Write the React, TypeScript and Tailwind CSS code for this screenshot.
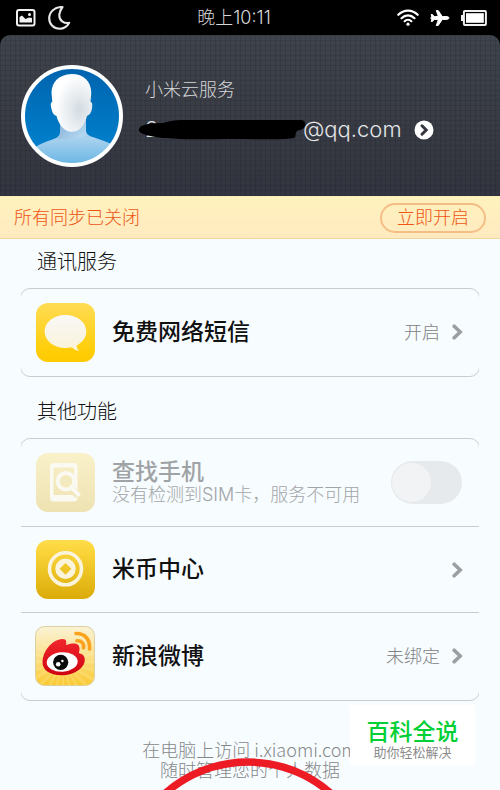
import React from "react";

const GalleryIcon = () => (
  <svg width="20" height="18" viewBox="0 0 20 18" fill="none">
    <rect x="1" y="1" width="17.5" height="15.5" rx="2" stroke="#f2f2f2" strokeWidth="2" />
    <path d="M3.500 13.500V8l2.500-1.500 3.500 3.500 3.500-1.500 3 .5v4.500z" fill="#f2f2f2" />
    <circle cx="13.500" cy="5.500" r="1.500" fill="#f2f2f2" />
  </svg>
);

const MoonIcon = () => (
  <svg width="23" height="24" viewBox="0 0 23 24" fill="none">
    <path
      d="M14.500 1C6.500.8 1.200 6 1.200 12.300c0 6 4.500 10.500 10.500 10.500 4 0 7.500-2.300 9.500-6-4.500 1-11-2-9.700-9C11.900 5 13 3 14.500 1z"
      stroke="#e8e8e8"
      strokeWidth="2.100"
      strokeLinejoin="round"
    />
  </svg>
);

const WifiIcon = () => (
  <svg width="22" height="17" viewBox="0 0 22 17" fill="none" stroke="#fff" strokeLinecap="round">
    <path d="M1.300 5.800c5.500-5.700 13.900-5.700 19.400 0" strokeWidth="2.200" />
    <path d="M4.500 9.200c3.700-3.800 9.300-3.800 13 0" strokeWidth="2.200" />
    <path d="M7.600 12.300c2-2 4.800-2 6.800 0" strokeWidth="2.100" />
    <circle cx="11" cy="15.200" r="1.600" fill="#fff" stroke="none" />
  </svg>
);

const PlaneIcon = () => (
  <svg width="20" height="18" viewBox="0 0 20 18" fill="#fff" stroke="#fff" strokeLinejoin="round">
    <path d="M19 9c0 .9-1.300 1.400-3 1.400h-3.700L8.200 16.500H6.300l2.100-6.100H4.200L2.400 12.500H1.200L1.900 9.800.6 9l1.300-.8-.7-2.700h1.200l1.800 2.100h4.200L6.300 1.500h1.900l4.100 6.100H16c1.700 0 3 .5 3 1.400z" />
  </svg>
);

const BatteryIcon = () => (
  <svg width="26" height="16" viewBox="0 0 26 16">
    <rect x="2.900" y="1.100" width="22" height="13.800" rx="1" fill="none" stroke="#f0f0f0" strokeWidth="2" />
    <rect x="0" y="5" width="3" height="6" fill="#f0f0f0" />
    <rect x="5" y="3.200" width="17.800" height="9.600" fill="#fff" />
  </svg>
);

const Avatar = () => (
  <svg width="102" height="102" viewBox="0 0 102 102" className="shrink-0">
    <defs>
      <linearGradient id="avatarBg" x1="0" y1="0" x2="0" y2="1">
        <stop offset="0" stopColor="#0063ae" />
        <stop offset="1" stopColor="#0086d2" />
      </linearGradient>
      <linearGradient id="avatarBody" x1="0" y1="0" x2="0" y2="1">
        <stop offset="0" stopColor="#86b0d8" />
        <stop offset="0.450" stopColor="#a9d2ee" />
        <stop offset="1" stopColor="#62b2e3" />
      </linearGradient>
      <linearGradient id="avatarNeck" x1="0" y1="0" x2="1" y2="0.400">
        <stop offset="0" stopColor="#7aa5d0" />
        <stop offset="1" stopColor="#b9dbf1" />
      </linearGradient>
      <radialGradient id="avatarHead" cx="0.700" cy="0.620" r="0.600">
        <stop offset="0" stopColor="#d3dce2" />
        <stop offset="0.550" stopColor="#ebeff2" />
        <stop offset="1" stopColor="#ffffff" />
      </radialGradient>
      <clipPath id="avatarClip">
        <circle cx="51" cy="51" r="48" />
      </clipPath>
    </defs>
    <circle cx="51" cy="51" r="49" fill="url(#avatarBg)" />
    <g clipPath="url(#avatarClip)">
      <path d="M39 50v17c0 4-3 6-9 8-8 2.500-13 5-18 9v18h80V80c-5-3-10-4.500-16-6.500-8-2.500-11-4-11-8V50z" fill="url(#avatarBody)" />
      <path d="M39 50v17c0 3-1 5-4 6.500 12 2 24 0 32-3.500-1.500-1-2-2.500-2-4.500V50z" fill="url(#avatarNeck)" opacity="0.700" />
      <path
        d="M50.500 9C38 9.500 30.500 17 30.500 28l.8 9c-1.800 0-1.800 3-.8 7 1 4.500 2.800 6.500 5 7 2 8 7.500 15.800 15.500 15.800S64 59 66 51c2.500-.8 4.300-3.500 5-7.500.7-4.500 0-6.500-1.500-6.500l.8-9C70.300 16.500 63 9 50.500 9z"
        fill="url(#avatarHead)"
      />
    </g>
    <circle cx="51" cy="51" r="49" fill="none" stroke="#fff" strokeWidth="4" />
  </svg>
);

const SmsIcon = () => (
  <svg width="59" height="59" viewBox="0 0 59 59" className="shrink-0">
    <defs>
      <linearGradient id="smsBg" x1="0" y1="0" x2="0" y2="1">
        <stop offset="0" stopColor="#ffdc54" />
        <stop offset="0.850" stopColor="#ffcd05" />
        <stop offset="1" stopColor="#fdc900" />
      </linearGradient>
      <linearGradient id="smsBubble" x1="0" y1="0" x2="0" y2="1">
        <stop offset="0" stopColor="#f8f8f6" />
        <stop offset="1" stopColor="#faf3d9" />
      </linearGradient>
    </defs>
    <rect width="59" height="59" rx="12" fill="url(#smsBg)" />
    <path
      d="M29.500 12C18 12 8.700 19.300 8.700 28.500S18 45 29.500 45c2.300 0 4.300-.2 6.300-.7 2 2 4.400 3.200 7.400 3.700-1.500-1.700-2.400-3.500-2.600-5.600 5.900-3 9.700-8 9.700-13.900C50.300 19.300 41 12 29.500 12z"
      fill="url(#smsBubble)"
    />
  </svg>
);

const FindPhoneIcon = () => (
  <svg width="59" height="59" viewBox="0 0 59 59" className="shrink-0">
    <defs>
      <linearGradient id="findBg" x1="0" y1="0" x2="0" y2="1">
        <stop offset="0" stopColor="#f9f1ca" />
        <stop offset="1" stopColor="#eee2b1" />
      </linearGradient>
    </defs>
    <rect width="59" height="59" rx="12" fill="url(#findBg)" />
    <path
      fillRule="evenodd"
      d="M18 10h19.500a4 4 0 0 1 4 4v30.500a4 4 0 0 1-4 4H18a4 4 0 0 1-4-4V14a4 4 0 0 1 4-4zm.5 4.500a1 1 0 0 0-1 1V41a1 1 0 0 0 1 1H37a1 1 0 0 0 1-1V15.500a1 1 0 0 0-1-1z"
      fill="#fafaf2"
    />
    <path d="M33 33.500l9 9" stroke="#f1e7bb" strokeWidth="7" />
    <circle cx="30" cy="28.300" r="8.300" fill="#f3eabf" stroke="#fafaf2" strokeWidth="4" />
    <path d="M35.500 34.500l7 7" stroke="#fafaf2" strokeWidth="4" strokeLinecap="round" />
  </svg>
);

const CoinIcon = () => (
  <svg width="59" height="59" viewBox="0 0 59 59" className="shrink-0">
    <defs>
      <linearGradient id="coinBg" x1="0" y1="0" x2="0" y2="1">
        <stop offset="0" stopColor="#ffdc4a" />
        <stop offset="0.250" stopColor="#f8d236" />
        <stop offset="1" stopColor="#dbab08" />
      </linearGradient>
    </defs>
    <rect width="59" height="59" rx="12" fill="url(#coinBg)" />
    <circle cx="29.500" cy="28.800" r="16" fill="none" stroke="#faf4dc" strokeWidth="3.600" />
    <path
      fillRule="evenodd"
      d="M29.500 18.600a10.200 10.200 0 1 1 0 20.400 10.200 10.200 0 0 1 0-20.400zm0 4.300l-5.900 5.900 5.900 5.900 5.900-5.900z"
      fill="#faf4dc"
    />
  </svg>
);

const rays = Array.from({ length: 24 }, (_, i) => i * 15);

const WeiboIcon = () => (
  <svg width="60" height="60" viewBox="0 0 60 60" className="-ml-px shrink-0">
    <defs>
      <linearGradient id="weiboBg" x1="0" y1="0" x2="0" y2="1">
        <stop offset="0" stopColor="#faf3da" />
        <stop offset="0.500" stopColor="#fbe08a" />
        <stop offset="1" stopColor="#fbc92f" />
      </linearGradient>
      <linearGradient id="weiboRed" x1="0" y1="0" x2="0" y2="1">
        <stop offset="0" stopColor="#f3262d" />
        <stop offset="1" stopColor="#cd0410" />
      </linearGradient>
      <clipPath id="weiboClip">
        <rect x="0.500" y="0.500" width="59" height="59" rx="9" />
      </clipPath>
    </defs>
    <g clipPath="url(#weiboClip)">
      <rect width="60" height="60" fill="url(#weiboBg)" />
      {rays.map((angle) => (
        <path key={angle} d="M28 36l-3-60h6z" fill="#fff3b0" opacity="0.250" transform={`rotate(${angle} 28 36)`} />
      ))}
    </g>
    <rect x="0.500" y="0.500" width="59" height="59" rx="9" fill="none" stroke="#dccfa4" />
    <path
      d="M7.500 35.500C8 27.500 12.500 20.500 18 16.500c4-3 10-4.500 12-3 1.800 1.300 1.500 3.300.8 5.500 4-1.500 9.700-2.300 12.200-.3 2 1.700 1.800 5.600.8 8.300 3.700 1 6 3 6 6.800 0 8-10.500 15.500-23 15.500S7 43.500 7.500 35.500z"
      fill="url(#weiboRed)"
    />
    <ellipse cx="27.200" cy="36" rx="15.500" ry="9.700" fill="#fff" transform="rotate(-3 27 36)" />
    <circle cx="25.700" cy="36.300" r="7.600" fill="#0a0a0a" />
    <circle cx="23.200" cy="38.300" r="2.300" fill="#fff" />
    <circle cx="27.400" cy="35" r="1.200" fill="#fff" />
    <path d="M41 7.500c8.500-.5 14.500 6 13.500 15.500" fill="none" stroke="#fba21c" strokeWidth="3.600" strokeLinecap="round" />
    <path d="M42 14.800c4.500-.3 7.300 2.800 6.500 7" fill="none" stroke="#fba21c" strokeWidth="3.600" strokeLinecap="round" />
  </svg>
);

const Chevron = () => (
  <svg width="11" height="16" viewBox="0 0 11 16" fill="none" className="shrink-0">
    <path d="M2.200 2.200L8.200 8l-6 5.800" stroke="#9c9fa1" strokeWidth="3.600" strokeLinecap="round" />
  </svg>
);

// Rows under "其他功能" that open another page
const services = [
  { name: "米币中心", status: "", icon: <CoinIcon /> },
  { name: "新浪微博", status: "未绑定", icon: <WeiboIcon /> },
];

const ServiceRow = ({ name, status, icon }: { name: string; status: string; icon: React.ReactNode }) => (
  <a href="#" className="flex h-[86px] items-center pr-4 pl-[15px]">
    {icon}
    <span className="ml-[17px] flex-1 text-[23px] font-medium text-[#111]">{name}</span>
    <span className="mr-3 text-[18px] font-light text-[#7e8183]">{status}</span>
    <Chevron />
  </a>
);

// Side borders sit outside the clipped area, so only the corners curl in
const Card = ({ children }: { children: React.ReactNode }) => (
  <div className="mx-[21px] overflow-hidden">
    <div className="-mx-px divide-y divide-[#c9cdd0] rounded-[10px] border border-[#c9cdd0] pb-px">{children}</div>
  </div>
);

const App: React.FC = () => {
  return (
    <div className="min-h-screen overflow-hidden bg-[#f7fcff] font-['Inter','Noto_Sans_CJK_SC',sans-serif]">
      {/* Status bar */}
      <div className="bg-black">
        <div className="flex h-[35px] items-center justify-between pr-[13px] pl-4">
          <div className="flex items-center gap-3">
            <GalleryIcon />
            <MoonIcon />
          </div>
          <span className="text-[18px] font-light text-[#d8d8d8]">晚上10:11</span>
          <div className="flex items-center gap-[11px]">
            <WifiIcon />
            <PlaneIcon />
            <BatteryIcon />
          </div>
        </div>

        {/* Account */}
        <header className="flex h-[161px] items-center rounded-t-[10px] bg-[repeating-linear-gradient(90deg,rgba(0,0,0,0.1)_0_1px,transparent_1px_5px),repeating-linear-gradient(0deg,rgba(0,0,0,0.08)_0_1px,transparent_1px_5px),linear-gradient(#3f434b,#32353f)] pl-[21px] text-[#e4e5e7]">
          <Avatar />
          <div className="ml-[22px] pb-2">
            <h1 className="text-[18px] leading-6 font-light text-[#d6d8da]">小米云服务</h1>
            <a href="#" className="mt-3 flex h-8 items-center">
              <span className="relative flex w-[158px] text-[22px] font-light">
                2
                <svg width="170" height="22" viewBox="0 0 170 22" className="absolute top-1/2 -left-[7px] -translate-y-1/2">
                  <path d="M1 10C3 5 12 4 25 4c8-2.500 14-3 25-3h112c5 0 6 3 5 6-1 3-5 4-8 5-2 3-1 6-3 7-8 2-35 1-60 1-30 0-50 1-68-1C14 18-1 15 1 10z" />
                </svg>
              </span>
              <span className="text-[22px] font-light">@qq.com</span>
              <svg width="20" height="20" viewBox="0 0 20 20" className="ml-3">
                <circle cx="10" cy="10" r="9.500" fill="#fff" />
                <path d="M8 5.800l4.200 4.200L8 14.200" fill="none" stroke="#34373f" strokeWidth="3" strokeLinecap="round" />
              </svg>
            </a>
          </div>
        </header>
      </div>

      {/* Sync notice */}
      <div className="flex h-[43px] items-center justify-between border-y border-t-[#fbeebd] border-b-[#efd79c] bg-linear-to-b from-[#fff2bd] to-[#ffeac0] px-[14px] text-[18px] font-light text-[#ee5414]">
        <span>所有同步已关闭</span>
        <button className="h-[30px] rounded-full border-2 border-[#f5be86] px-[15px] leading-none font-light">
          立即开启
        </button>
      </div>

      <main>
        <h2 className="px-[37px] pt-2 pb-[11px] text-[20px] leading-[30px] font-light text-[#111]">通讯服务</h2>
        <Card>
          <ServiceRow name="免费网络短信" status="开启" icon={<SmsIcon />} />
        </Card>

        <h2 className="px-[37px] pt-5 pb-[11px] text-[20px] leading-[30px] font-light text-[#111]">其他功能</h2>
        <Card>
          <div className="flex h-[88px] items-center pr-[17px] pl-[15px]">
            <FindPhoneIcon />
            <label htmlFor="find-phone" className="ml-[17px] flex-1">
              <span className="block text-[23px] leading-6 font-medium text-[#a0a3a5]">查找手机</span>
              <span className="block text-[18px] leading-[22px] font-light text-[#a2a5a7]">
                没有检测到SIM卡，服务不可用
              </span>
            </label>
            <input
              id="find-phone"
              type="checkbox"
              disabled
              className="h-[43px] w-[71px] shrink-0 appearance-none rounded-full bg-[#e6eaec] p-px before:mt-px before:block before:size-[39px] before:rounded-full before:bg-[#f2f3f5]"
            />
          </div>
          {services.map((service) => (
            <ServiceRow key={service.name} {...service} />
          ))}
        </Card>
      </main>

      <footer className="relative overflow-hidden pt-[38px] pb-[11px] text-center font-['Noto_Sans_CJK_SC',sans-serif] text-[18px] leading-5 font-light text-[#858889]">
        <p>在电脑上访问 i.xiaomi.com</p>
        <p>随时管理您的个人数据</p>
        <svg width="180" height="32" viewBox="0 0 180 32" className="absolute bottom-0 left-1/2 -ml-[92px]">
          <circle cx="90" cy="129" r="125" fill="none" stroke="#ed1c24" strokeWidth="7.500" />
        </svg>
        <div className="absolute top-1 right-[25px] w-[125px] bg-white pt-[11px] pb-[6px]">
          <p className="text-[23px] leading-7 font-medium text-[#00d035]">百科全说</p>
          <p className="text-[13px] leading-[15px] font-normal text-[#8c8c8c]">助你轻松解决</p>
        </div>
      </footer>
    </div>
  );
};

export default App;
